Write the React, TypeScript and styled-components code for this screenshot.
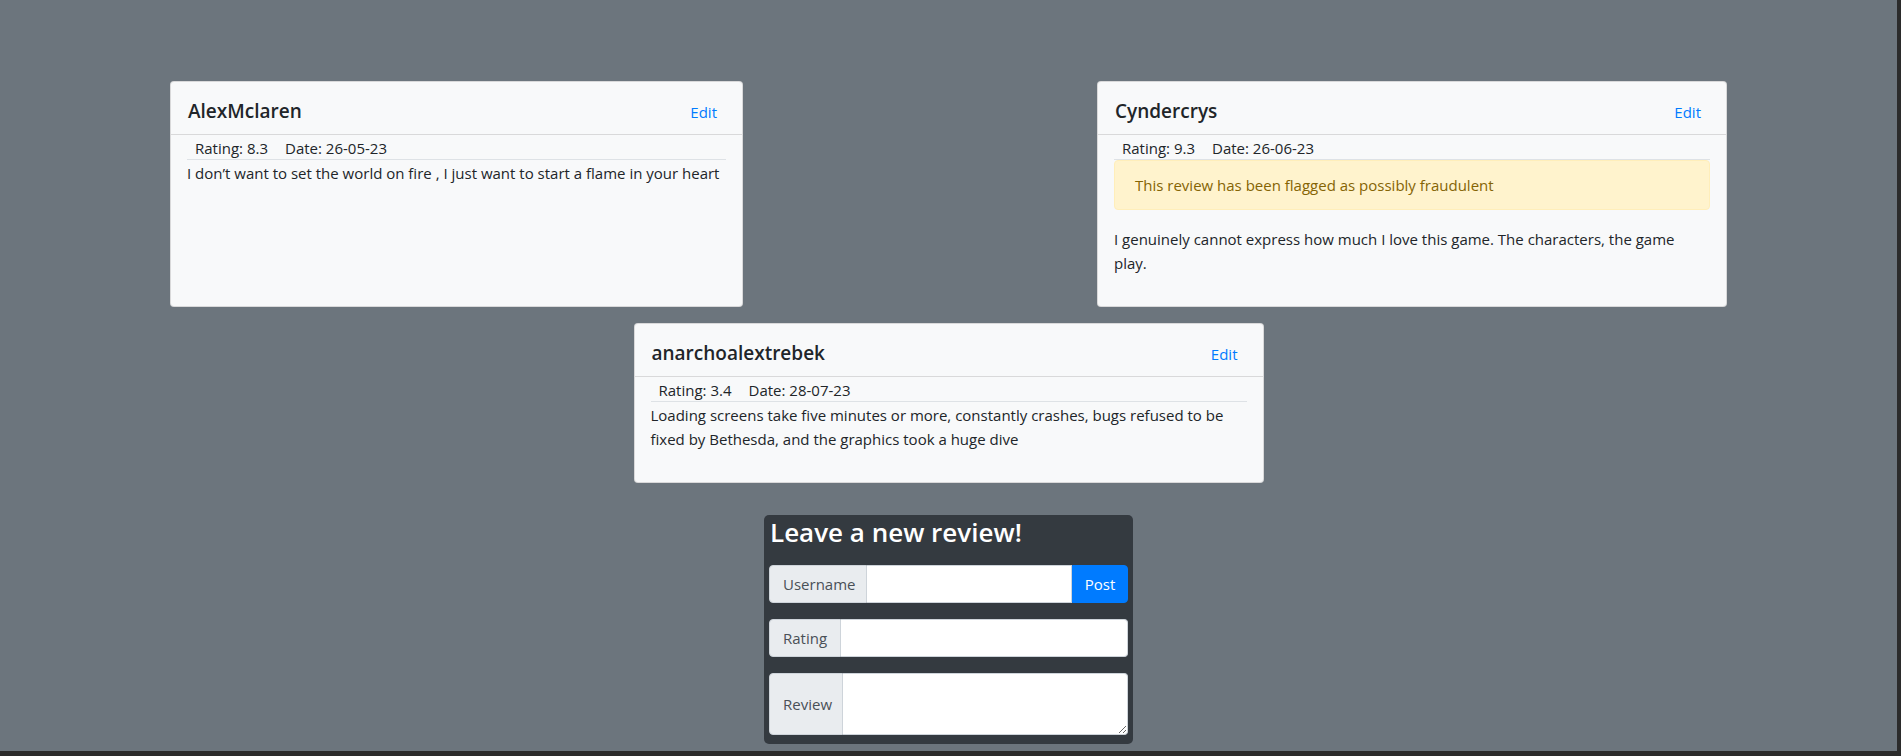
import React from "react";
import styled, { createGlobalStyle } from "styled-components";

const GlobalStyle = createGlobalStyle`
  *, *::before, *::after { box-sizing: border-box; }
  html, body { margin: 0; padding: 0; background: #2b2b2b; }
  body {
    font-family: "Open Sans", "Noto Sans", sans-serif;
    font-size: 15px;
    line-height: 24px;
    color: #212529;
  }
`;

const Page = styled.div`
  width: 1897px;
  height: 751px;
  background: #6c757d;
  display: flex;
  flex-direction: column;
  align-items: center;
  padding-top: 81px;
  overflow: hidden;
`;

const CardRow = styled.div<{ $top?: number }>`
  display: flex;
  justify-content: center;
  align-items: stretch;
  gap: 354px;
  width: 100%;
  margin-top: ${(p) => p.$top ?? 0}px;
`;

const Card = styled.div<{ $w: number }>`
  width: ${(p) => p.$w}px;
  background: #f8f9fa;
  border: 1px solid rgba(0, 0, 0, 0.125);
  border-radius: 4px;
  display: flex;
  flex-direction: column;
`;

const CardHeader = styled.div`
  height: 53px;
  padding: 17px 25px 0 17px;
  display: flex;
  justify-content: space-between;
  align-items: baseline;
  border-bottom: 1px solid rgba(0, 0, 0, 0.125);
`;

const Username = styled.h5`
  margin: 0;
  font-size: 19px;
  line-height: 24px;
  font-weight: 600;
  color: #212529;
`;

const EditLink = styled.a`
  font-size: 15px;
  line-height: 24px;
  color: #007bff;
  text-decoration: none;
  cursor: pointer;
`;

const CardBody = styled.div`
  padding: 0 16px 31px;
  display: flex;
  flex-direction: column;
`;

const Meta = styled.div`
  display: flex;
  gap: 17px;
  padding: 1px 0 0 8px;
  height: 25px;
  line-height: 24px;
  border-bottom: 1px solid #dee2e6;
`;

const Alert = styled.div`
  margin: 0 0 16px;
  padding: 12px 20px;
  background: #fff3cd;
  border: 1px solid #ffeeba;
  border-radius: 4px;
  color: #856404;
  line-height: 24px;
`;

const ReviewText = styled.p`
  margin: 0;
  padding-top: 1px;
  line-height: 24px;
`;

const FormCard = styled.form`
  width: 369px;
  margin-top: 32px;
  background: #343a40;
  border-radius: 5px;
  padding: 0 5px 9px;
  display: flex;
  flex-direction: column;
  gap: 16px;
`;

const FormTitle = styled.h3`
  margin: 0;
  padding: 1px 0 0 1px;
  height: 33.6px;
  font-size: 26px;
  line-height: 33.6px;
  font-weight: 600;
  color: #ffffff;
`;

const InputGroup = styled.div<{ $h: number }>`
  display: flex;
  height: ${(p) => p.$h}px;
`;

const GroupLabel = styled.span<{ $w: number }>`
  width: ${(p) => p.$w}px;
  flex: none;
  display: flex;
  align-items: center;
  padding-left: 13px;
  background: #e9ecef;
  border: 1px solid #ced4da;
  border-radius: 4px 0 0 4px;
  color: #495057;
  font-size: 15px;
`;

const TextInput = styled.input<{ $last?: boolean }>`
  flex: 1;
  min-width: 0;
  border: 1px solid #ced4da;
  border-left: 0;
  border-radius: ${(p) => (p.$last ? "0 4px 4px 0" : "0")};
  background: #fff;
  font: inherit;
  padding: 0 12px;
  outline: none;
`;

const TextArea = styled.textarea`
  flex: 1;
  min-width: 0;
  border: 1px solid #ced4da;
  border-left: 0;
  border-radius: 0 4px 4px 0;
  background: #fff;
  font: inherit;
  padding: 6px 12px;
  outline: none;
  margin: 0;
`;

const PostButton = styled.button`
  width: 56px;
  flex: none;
  border: 1px solid #007bff;
  background: #007bff;
  color: #fff;
  font: inherit;
  font-size: 15px;
  border-radius: 0 4px 4px 0;
  padding: 0;
  cursor: pointer;
`;

type Review = {
  user: string;
  rating: string;
  date: string;
  text: string;
  flagged?: boolean;
  width: number;
};

const reviews: Review[] = [
  {
    user: "AlexMclaren",
    rating: "8.3",
    date: "26-05-23",
    text: "I don\u2019t want to set the world on fire , I just want to start a flame in your heart",
    width: 573,
  },
  {
    user: "Cyndercrys",
    rating: "9.3",
    date: "26-06-23",
    text: "I genuinely cannot express how much I love this game. The characters, the game play.",
    flagged: true,
    width: 630,
  },
  {
    user: "anarchoalextrebek",
    rating: "3.4",
    date: "28-07-23",
    text: "Loading screens take five minutes or more, constantly crashes, bugs refused to be fixed by Bethesda, and the graphics took a huge dive",
    width: 630,
  },
];

const ReviewCard = ({ r }: { r: Review }) => (
  <Card $w={r.width}>
    <CardHeader>
      <Username>{r.user}</Username>
      <EditLink>Edit</EditLink>
    </CardHeader>
    <CardBody>
      <Meta>
        <span>Rating: {r.rating}</span>
        <span>Date: {r.date}</span>
      </Meta>
      {r.flagged && <Alert>This review has been flagged as possibly fraudulent</Alert>}
      <ReviewText>{r.text}</ReviewText>
    </CardBody>
  </Card>
);

export default function App() {
  return (
    <>
      <GlobalStyle />
      <Page>
        <CardRow>
          <ReviewCard r={reviews[0]} />
          <ReviewCard r={reviews[1]} />
        </CardRow>
        <CardRow $top={16}>
          <ReviewCard r={reviews[2]} />
        </CardRow>
        <FormCard onSubmit={(e) => e.preventDefault()}>
          <FormTitle>Leave a new review!</FormTitle>
          <InputGroup $h={38}>
            <GroupLabel $w={98}>Username</GroupLabel>
            <TextInput type="text" />
            <PostButton type="submit">Post</PostButton>
          </InputGroup>
          <InputGroup $h={38}>
            <GroupLabel $w={72}>Rating</GroupLabel>
            <TextInput type="text" $last />
          </InputGroup>
          <InputGroup $h={62}>
            <GroupLabel $w={74}>Review</GroupLabel>
            <TextArea />
          </InputGroup>
        </FormCard>
      </Page>
    </>
  );
}
